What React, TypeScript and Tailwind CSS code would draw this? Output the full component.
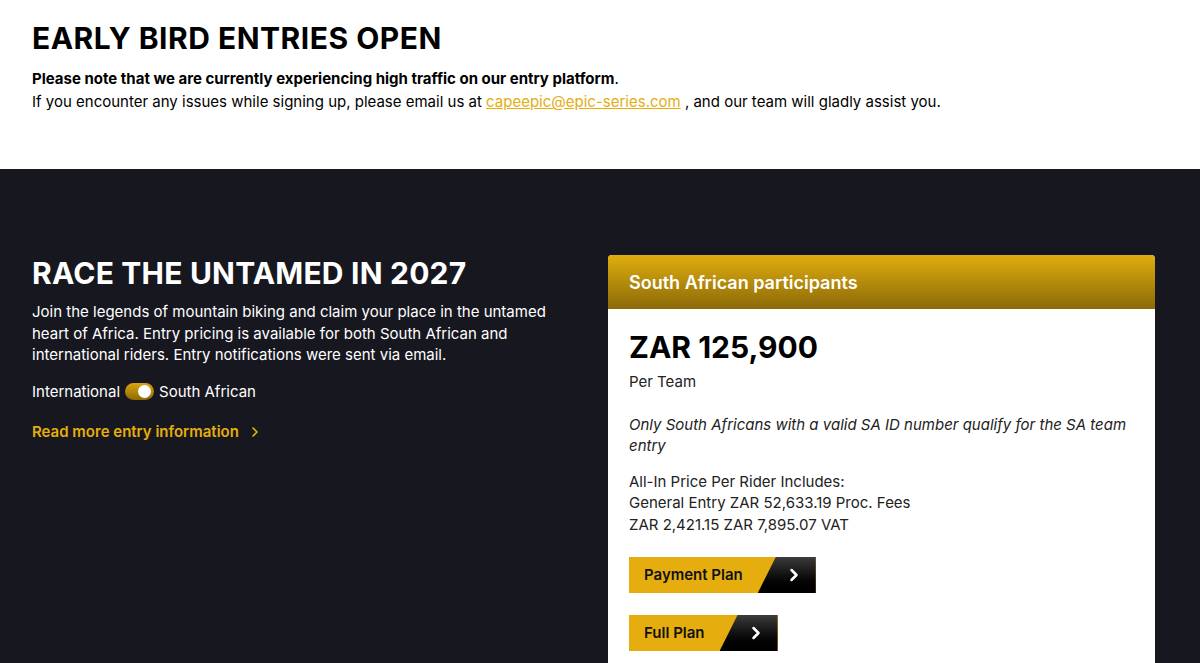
import { ChevronRight } from "lucide-react";

const font = "font-['Inter','Liberation_Sans',sans-serif]";

function PlanButton({ label }: { label: string }) {
  return (
    <button className="flex h-[36px] items-stretch bg-[#e5ad0e]">
      <span className="flex items-center pl-[15px] pr-[15px] text-[15px] font-semibold text-[#111]">
        {label}
      </span>
      <span className="flex w-[58px] items-center justify-center bg-gradient-to-b from-[#3d3d3d] to-black pl-[14px] text-white [clip-path:polygon(18px_0,100%_0,100%_100%,0_100%)]">
        <ChevronRight size={20} strokeWidth={3} />
      </span>
    </button>
  );
}

function Toggle() {
  return (
    <span className="relative inline-flex h-[17px] w-[29px] items-center rounded-full bg-gradient-to-b from-[#d9a60f] to-[#8f6a06]">
      <span className="absolute right-[3px] h-[13px] w-[13px] rounded-full bg-white" />
    </span>
  );
}

export default function App() {
  return (
    <div className={`${font} min-h-screen bg-[#17171f]`}>
      {/* Notice */}
      <section className="h-[169px] bg-white px-[32px] pt-[20px]">
        <h1 className="text-[30px] font-bold leading-[36px] tracking-[0.5px] text-black">EARLY BIRD ENTRIES OPEN</h1>
        <p className="mt-[11px] text-[15px] leading-[23px] text-black">
          <strong className="font-bold">Please note that we are currently experiencing high traffic on our entry platform</strong>.
          <br />
          If you encounter any issues while signing up, please email us at{" "}
          <a href="#" className="text-[#e5ad0e] underline">capeepic@epic-series.com</a> , and our team will gladly assist you.
        </p>
      </section>

      {/* Entries */}
      <section className="flex items-start gap-[32px] px-[32px] pt-[86px]">
        <div className="w-[544px] text-white">
          <h2 className="text-[30px] font-bold leading-[36px] tracking-[0.2px]">RACE THE UNTAMED IN 2027</h2>
          <p className="mt-[10px] text-[15px] leading-[21.5px]">
            Join the legends of mountain biking and claim your place in the untamed heart of Africa. Entry pricing is
            available for both South African and international riders. Entry notifications were sent via email.
          </p>
          <div className="mt-[15px] flex items-center gap-[5px] text-[15px]">
            <span>International</span>
            <Toggle />
            <span>South African</span>
          </div>
          <a href="#" className="mt-[18px] flex items-center gap-[8px] text-[15px] font-semibold text-[#e5ad0e]">
            Read more entry information
            <ChevronRight size={16} strokeWidth={2.5} />
          </a>
        </div>

        <div className="w-[547px] overflow-hidden rounded-t-[4px] bg-white">
          <div className="flex h-[54px] items-center bg-gradient-to-b from-[#e0ae0f] to-[#8c6a08] px-[21px] text-[18px] font-semibold text-white">
            South African participants
          </div>
          <div className="px-[21px] pt-[20px] pb-[40px] text-[15px] text-[#222]">
            <div className="text-[30px] font-bold leading-[36px] text-black">ZAR 125,900</div>
            <div className="mt-[6px] leading-[21.5px]">Per Team</div>
            <p className="mt-[21px] italic leading-[21.5px]">
              Only South Africans with a valid SA ID number qualify for the SA team entry
            </p>
            <p className="mt-[14px] leading-[21.5px]">
              All-In Price Per Rider Includes:
              <br />
              General Entry ZAR 52,633.19 Proc. Fees
              <br />
              ZAR 2,421.15 ZAR 7,895.07 VAT
            </p>
            <div className="mt-[22px] flex flex-col items-start gap-[22px]">
              <PlanButton label="Payment Plan" />
              <PlanButton label="Full Plan" />
            </div>
          </div>
        </div>
      </section>
    </div>
  );
}
